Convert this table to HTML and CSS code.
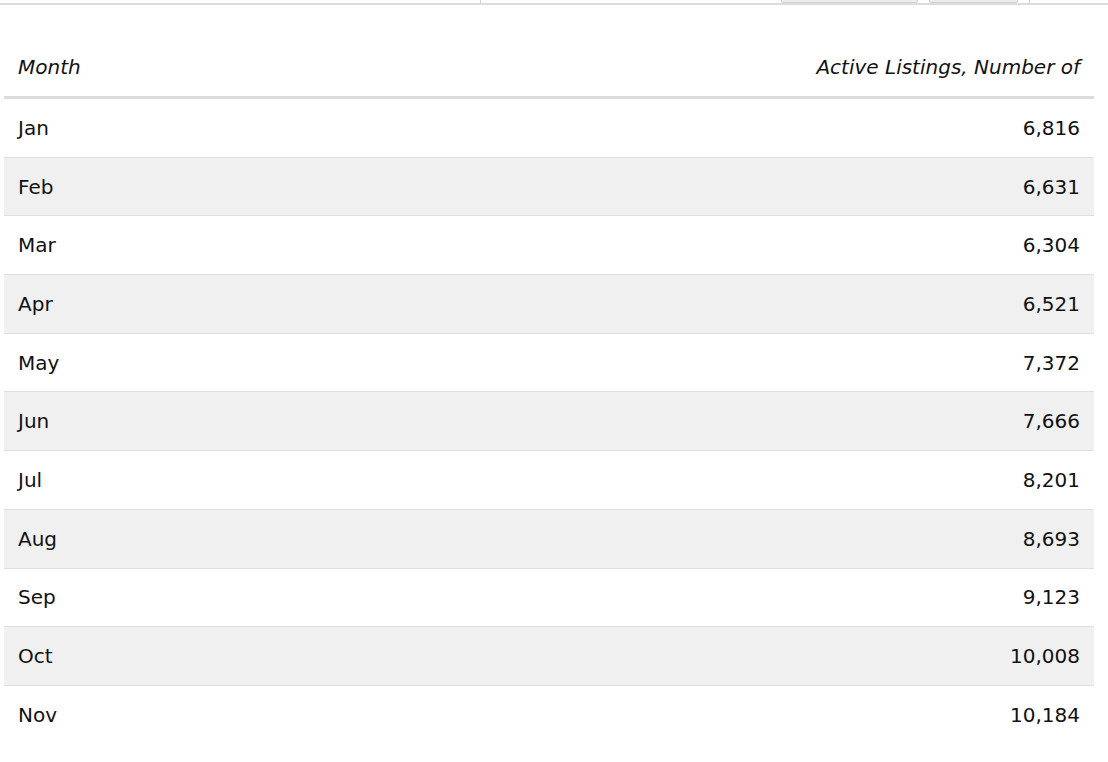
FILE: index.html
```html
<!DOCTYPE html>
<html>
<head>
<meta charset="utf-8">
<link rel="stylesheet" href="styles.css">
</head>
<body>
<div class="topbar">
  <span class="tick tick-a"></span>
  <span class="btn btn-a"></span>
  <span class="btn btn-b"></span>
  <span class="tick tick-b"></span>
</div>
<table class="data">
  <thead>
    <tr><th class="left">Month</th><th class="right">Active Listings, Number of</th></tr>
  </thead>
  <tbody>
    <tr><td class="left">Jan</td><td class="right">6,816</td></tr>
    <tr><td class="left">Feb</td><td class="right">6,631</td></tr>
    <tr><td class="left">Mar</td><td class="right">6,304</td></tr>
    <tr><td class="left">Apr</td><td class="right">6,521</td></tr>
    <tr><td class="left">May</td><td class="right">7,372</td></tr>
    <tr><td class="left">Jun</td><td class="right">7,666</td></tr>
    <tr><td class="left">Jul</td><td class="right">8,201</td></tr>
    <tr><td class="left">Aug</td><td class="right">8,693</td></tr>
    <tr><td class="left">Sep</td><td class="right">9,123</td></tr>
    <tr><td class="left">Oct</td><td class="right">10,008</td></tr>
    <tr><td class="left">Nov</td><td class="right">10,184</td></tr>
  </tbody>
</table>
</body>
</html>
```

FILE: styles.css
```css
html, body {
  margin: 0;
  padding: 0;
  background: #ffffff;
}
body {
  font-family: "DejaVu Sans", Verdana, sans-serif;
  color: #111111;
  overflow: hidden;
}
.topbar {
  position: relative;
  height: 3px;
  border-bottom: 2px solid #dcdcdc;
}
.tick {
  position: absolute;
  top: 0;
  width: 1px;
  height: 3px;
  background: #d0d0d0;
}
.tick-a { left: 480px; }
.tick-b { left: 1029px; }
.btn {
  position: absolute;
  top: -3px;
  height: 4px;
  background: #ececec;
  border: 1px solid #d2d2d2;
  border-radius: 2px;
}
.btn-a { left: 781px; width: 135px; }
.btn-b { left: 929px; width: 87px; }
.data {
  margin: 34px 0 0 4px;
  width: 1090px;
  border-collapse: collapse;
  font-size: 20px;
}
.data th {
  font-weight: normal;
  font-style: italic;
  height: 55px;
  padding: 0 14px 2px;
  vertical-align: middle;
  border-bottom: 3px solid #dcdcdc;
}
.data td {
  height: 57.7px;
  padding: 0 14px;
  vertical-align: middle;
  border-bottom: 1px solid #dedede;
}
.data tbody tr:nth-child(even) td {
  background: #f0f0f0;
}
.data tbody tr:last-child td {
  border-bottom: none;
}
.left { text-align: left; }
.right { text-align: right; }
```
